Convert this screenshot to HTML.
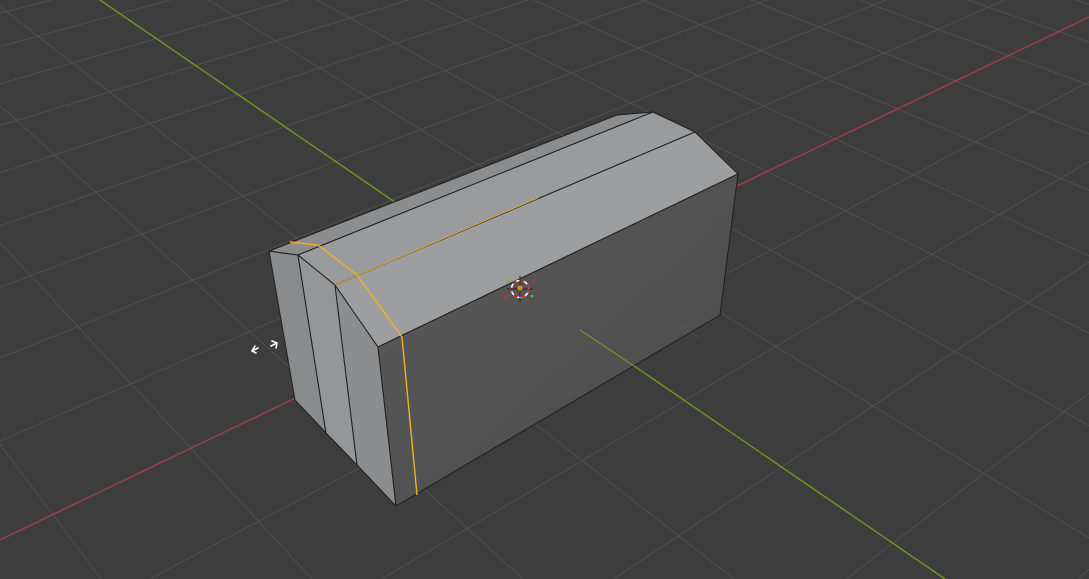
<!DOCTYPE html>
<html><head><meta charset="utf-8"><style>
html,body{margin:0;padding:0;background:#3d3d3d;overflow:hidden;width:1089px;height:579px}
svg{display:block;position:absolute;left:0;top:0}
</style></head><body>
<svg id="s" width="1089" height="579" viewBox="0 0 1089 579" xmlns="http://www.w3.org/2000/svg">
<rect width="1089" height="579" fill="#3d3d3d"/>
<g id="grid" stroke="#505050" stroke-width="1" fill="none"></g>
<line x1="0" y1="540" x2="1089" y2="17" stroke="#a03c4a" stroke-width="1.4"/>
<line x1="100" y1="0" x2="945" y2="579" stroke="#6f9622" stroke-width="1.4"/>
<g stroke="#1e1e1e" stroke-width="1" stroke-linejoin="round">
<polygon points="269,251 298,255 326,433 295,400" fill="#8a8b8c"/>
<polygon points="298,255 335,285 357,465 326,433" fill="#959697"/>
<polygon points="335,285 378,347 396,506 357,465" fill="#8c8d8e"/>
<polygon points="269,251 617,115 653,112 298,255" fill="#8c8d8f"/>
<polygon points="298,255 653,112 695,132 335,285" fill="#9a9b9d"/>
<polygon points="335,285 695,132 738,174 378,347" fill="#9d9ea0"/>
<defs><linearGradient id="fg" x1="0" y1="0" x2="1" y2="1">
<stop offset="0" stop-color="#5a5a5a"/><stop offset="1" stop-color="#4a4a4a"/></linearGradient></defs>
<polygon points="378,347 738,174 720,315 396,506" fill="url(#fg)"/>
</g>
<g stroke="#5e5e5e" stroke-width="0.8" opacity="0.5">
<line x1="480" y1="446" x2="700" y2="318"/>
<line x1="640" y1="300" x2="700" y2="338"/>
</g>
<line x1="580" y1="330" x2="640" y2="370" stroke="#6f9622" stroke-width="1.2"/>
<polyline points="290,242 318,245 357,275 402,337 417,495" fill="none" stroke="#f0b020" stroke-width="1.4"/>
<line x1="335" y1="285" x2="538" y2="198" stroke="#e8b020" stroke-width="0.9"/>
<g>
<circle cx="520" cy="289" r="8.5" fill="none" stroke="#ffffff" stroke-width="1.6"/>
<circle cx="520" cy="289" r="8.5" fill="none" stroke="#d02020" stroke-width="1.6" stroke-dasharray="4 4"/>
<line x1="520" y1="276" x2="520" y2="302" stroke="#222" stroke-width="1"/>
<line x1="507" y1="289" x2="533" y2="289" stroke="#222" stroke-width="1"/>
<circle cx="520" cy="288" r="2.5" fill="#f08a10"/>
<circle cx="534" cy="281" r="1.3" fill="#d03030"/>
<circle cx="505" cy="297" r="1.3" fill="#d03030"/>
<circle cx="532" cy="296" r="1.3" fill="#60c030"/>
<circle cx="508" cy="281" r="1.3" fill="#60c030"/>
</g>
<g stroke="#ffffff" stroke-width="1.6" fill="none" stroke-linecap="round">
<path d="M252,351 L258,348 M252,351 L255,346 M252,351 L256,353"/>
<path d="M277,343 L271,346 M277,343 L272,341 M277,343 L276,348"/>
</g>
</svg>
<script>
(function(){
var VR=[2400,-612],VG=[-793,-612],O=[522,289],a=0.05,b=0.055;
function P(u,v){var d=a*u+b*v+1;return [(a*u*VR[0]+b*v*VG[0]+O[0])/d,(a*u*VR[1]+b*v*VG[1]+O[1])/d];}
var g=document.getElementById('grid'),h='';
function seg(fn,lo,hi,other,isU){
  var A=isU?b:a, C=(isU?a:b)*other+1;
  var tmin=lo,tmax=hi;
  if(A>0){tmin=Math.max(tmin,(0.04-C)/A);} else if(A<0){tmax=Math.min(tmax,(0.04-C)/A);}
  if(tmin>=tmax)return;
  var p=fn(tmin),q=fn(tmax);
  h+='<line x1="'+p[0].toFixed(1)+'" y1="'+p[1].toFixed(1)+'" x2="'+q[0].toFixed(1)+'" y2="'+q[1].toFixed(1)+'"/>';
}
for(var u=-40;u<=120;u++){(function(u){seg(function(v){return P(u,v)},-60,400,u,true);})(u);}
for(var v=-40;v<=120;v++){(function(v){seg(function(u){return P(u,v)},-60,400,v,false);})(v);}
g.innerHTML=h;
})();
</script>
</body></html>
